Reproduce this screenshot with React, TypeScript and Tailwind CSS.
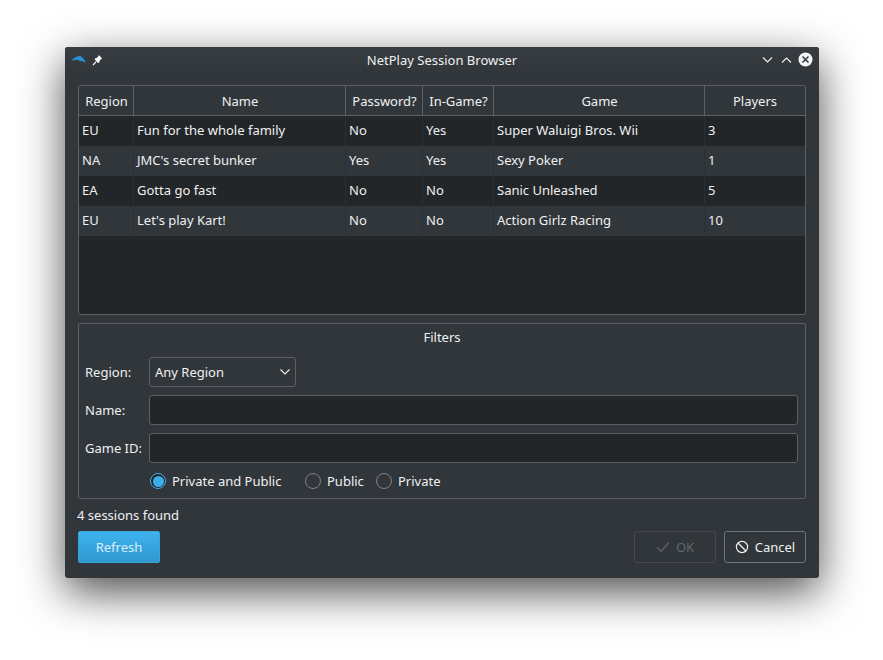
const headers = ["Region", "Name", "Password?", "In-Game?", "Game", "Players"];
const rows = [
  ["EU", "Fun for the whole family", "No", "Yes", "Super Waluigi Bros. Wii", "3"],
  ["NA", "JMC's secret bunker", "Yes", "Yes", "Sexy Poker", "1"],
  ["EA", "Gotta go fast", "No", "No", "Sanic Unleashed", "5"],
  ["EU", "Let's play Kart!", "No", "No", "Action Girlz Racing", "10"],
];
const cols = "grid grid-cols-[55px_212px_77px_71px_211px_100px]";

function Radio({ checked, label, className }: { checked?: boolean; label: string; className: string }) {
  return (
    <div className={`flex items-center gap-[6px] ${className}`}>
      {checked ? (
        <span className="flex h-[16px] w-[16px] items-center justify-center rounded-full border border-[#3daee9] bg-[#232629]">
          <span className="h-[11px] w-[11px] rounded-full bg-[#3daee9]" />
        </span>
      ) : (
        <span className="h-[16px] w-[16px] rounded-full border border-[#7f8387]" />
      )}
      <span>{label}</span>
    </div>
  );
}

export default function App() {
  return (
    <div className="h-[660px] w-[883px] overflow-hidden bg-white pl-[65px] pt-[47px] text-[13px] leading-[18px] text-[#eff0f1] [font-family:'Noto_Sans',sans-serif]">
      <div className="flex h-[531px] w-[754px] flex-col rounded-[3px] bg-[#31363b] px-[13px] shadow-[0_14px_44px_rgba(0,0,0,0.7)]">
        <div className="relative -mx-[13px] flex h-[26px] shrink-0 items-center justify-center rounded-t-[3px] bg-gradient-to-b from-[#383d42] to-[#31363b]">
          <span>NetPlay Session Browser</span>
          <svg className="absolute left-[5px] top-[7px]" width="17" height="10" viewBox="0 0 17 10">
            <path d="M1 7C3 4.5 5.5 2.5 9 2L10.5 1.5L11.5 3C13.5 4 15 6 15.5 9C14 7.8 12.5 7.2 11 7.2L8.5 6.2C6 5.8 3.5 6 1 7Z" fill="#2a8fcb" />
          </svg>
          <svg className="absolute left-[27px] top-[7px]" width="11" height="12" viewBox="0 0 11 12">
            <path d="M6.8 1L10.2 4.4L9 5L7.4 7.2L7.2 9L5.9 8.8L2.9 5.8L2.8 4.4L4.6 4.1L6.4 2.3Z" fill="#fcfcfc" />
            <path d="M4.2 7.6L1 11" stroke="#fcfcfc" strokeWidth="1.2" />
          </svg>
          <svg className="absolute left-[697px] top-[9px]" width="11" height="8" viewBox="0 0 11 8" fill="none" stroke="#eff0f1" strokeWidth="1.1">
            <path d="M1 1.5L5.5 6L10 1.5" />
          </svg>
          <svg className="absolute left-[716px] top-[9px]" width="11" height="8" viewBox="0 0 11 8" fill="none" stroke="#eff0f1" strokeWidth="1.1">
            <path d="M1 6.5L5.5 2L10 6.5" />
          </svg>
          <svg className="absolute left-[733px] top-[5px]" width="15" height="15" viewBox="0 0 15 15">
            <circle cx="7.5" cy="7.5" r="7" fill="#f5f5f5" />
            <path d="M4.5 4.5L10.5 10.5M10.5 4.5L4.5 10.5" stroke="#31363b" strokeWidth="1.5" />
          </svg>
        </div>

        <div className="mt-[12px] h-[230px] w-[728px] shrink-0 overflow-hidden rounded-[2px] border border-[#5c6064] bg-[#232629]">
          <div className={`${cols} h-[30px] border-b border-[#5c6064] bg-[#31363b]`}>
            {headers.map((h, i) => (
              <div key={h} className={`flex items-center justify-center ${i < 5 ? "border-r border-[#5c6064] pl-px" : ""}`}>{h}</div>
            ))}
          </div>
          {rows.map((r, ri) => (
            <div key={ri} className={`${cols} h-[30px] ${ri % 2 ? "bg-[#31363b]" : "bg-[#232629]"}`}>
              {r.map((c, i) => (
                <div key={i} className={`flex items-center pb-[2px] pl-[3px] ${i < 5 ? "border-r border-[#2b3034]" : ""}`}>{c}</div>
              ))}
            </div>
          ))}
        </div>

        <div className="mt-[8px] h-[176px] w-[728px] shrink-0 rounded-[2px] border border-[#5c6064] px-[6px]">
          <div className="flex h-[25px] items-center justify-center">Filters</div>
          <div className="mt-[8px] flex h-[30px] items-center">
            <span className="w-[64px]">Region:</span>
            <div className="flex h-[30px] w-[147px] items-center justify-between rounded-[3px] border border-[#5c6064] px-[5px] pr-[4px]">
              <span>Any Region</span>
              <svg width="12" height="8" viewBox="0 0 12 8" fill="none" stroke="#eff0f1" strokeWidth="1.1">
                <path d="M1.5 1.5L6 6L10.5 1.5" />
              </svg>
            </div>
          </div>
          <div className="mt-[8px] flex h-[30px] items-center">
            <span className="w-[64px]">Name:</span>
            <div className="h-[30px] w-[649px] rounded-[3px] border border-[#5c6064] bg-[#232629]" />
          </div>
          <div className="mt-[8px] flex h-[30px] items-center">
            <span className="w-[64px]">Game ID:</span>
            <div className="h-[30px] w-[649px] rounded-[3px] border border-[#5c6064] bg-[#232629]" />
          </div>
          <div className="mt-[8px] flex h-[20px] items-center pl-[65px]">
            <Radio checked label="Private and Public" className="w-[155px]" />
            <Radio label="Public" className="w-[71px]" />
            <Radio label="Private" className="" />
          </div>
        </div>

        <div className="mt-[7px] -ml-px h-[18px] shrink-0">4 sessions found</div>

        <div className="mt-[7px] flex h-[32px] w-[728px] shrink-0 items-stretch">
          <button className="w-[82px] rounded-[2px] border border-[#3aa5dd] bg-gradient-to-b from-[#3fb3ee] to-[#2f97d0] text-[#d7eefb]">Refresh</button>
          <button className="ml-auto flex w-[82px] items-center justify-center gap-[6px] rounded-[3px] border border-[#45494e] text-[#63676b]">
            <svg width="14" height="12" viewBox="0 0 14 12" fill="none" stroke="#63676b" strokeWidth="1.2">
              <path d="M1 6.5L5 10.5L13 1.5" />
            </svg>
            <span>OK</span>
          </button>
          <button className="ml-[8px] flex w-[82px] items-center justify-center gap-[6px] rounded-[3px] border border-[#70757a]">
            <svg width="14" height="14" viewBox="0 0 14 14" fill="none" stroke="#eff0f1" strokeWidth="1.2">
              <circle cx="7" cy="7" r="5.6" />
              <path d="M3 3L11 11" />
            </svg>
            <span>Cancel</span>
          </button>
        </div>
      </div>
    </div>
  );
}
